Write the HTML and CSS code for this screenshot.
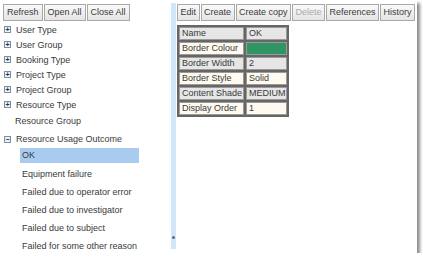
FILE: index.html
```html
<!DOCTYPE html>
<html lang="en">
<head>
    <meta charset="UTF-8">
    <title>Resource Usage Outcome</title>
    <link rel="stylesheet" href="styles.css">
</head>
<body>
    <div class="window">
        <div class="tree-pane">
            <div class="toolbar">
                <button>Refresh</button>
                <button>Open All</button>
                <button>Close All</button>
            </div>

            <ul class="tree">
                <li class="node"><span class="toggle">+</span>User Type</li>
                <li class="node"><span class="toggle">+</span>User Group</li>
                <li class="node"><span class="toggle">+</span>Booking Type</li>
                <li class="node"><span class="toggle">+</span>Project Type</li>
                <li class="node"><span class="toggle">+</span>Project Group</li>
                <li class="node"><span class="toggle">+</span>Resource Type</li>
                <li class="node leaf">Resource Group</li>
                <li class="node open"><span class="toggle">&minus;</span>Resource Usage Outcome</li>
                <li>
                    <ul class="children">
                        <li class="child selected">OK</li>
                        <li class="child">Equipment failure</li>
                        <li class="child">Failed due to operator error</li>
                        <li class="child">Failed due to investigator</li>
                        <li class="child">Failed due to subject</li>
                        <li class="child">Failed for some other reason</li>
                    </ul>
                </li>
            </ul>
        </div>

        <div class="splitter"><span class="grip"></span></div>

        <div class="detail-pane">
            <div class="toolbar actions">
                <button>Edit</button>
                <button>Create</button>
                <button>Create copy</button>
                <button disabled>Delete</button>
                <button>References</button>
                <button>History</button>
            </div>

            <table class="props">
                <tr class="even"><td>Name</td><td>OK</td></tr>
                <tr class="odd"><td>Border Colour</td><td><div class="swatch"></div></td></tr>
                <tr class="even"><td>Border Width</td><td>2</td></tr>
                <tr class="odd"><td>Border Style</td><td>Solid</td></tr>
                <tr class="even"><td>Content Shade</td><td>MEDIUM</td></tr>
                <tr class="odd"><td>Display Order</td><td>1</td></tr>
            </table>
        </div>
    </div>
</body>
</html>
```

FILE: styles.css
```css
:root {
    --text-color: #3a3a3a;
    --button-border: #a8a8a8;
    --splitter-color: #cfe7f8;
    --selected-bg: #aacbf0;
    --row-grey: #e6e6e6;
    --row-cream: #fff9ef;
}

body {
    margin: 0;
    background: #ffffff;
    font-family: "Liberation Sans", Arial, sans-serif;
    font-size: 9px;
    color: var(--text-color);
}

.window {
    display: flex;
    width: 417px;
    height: 253px;
    background: #ffffff;
    box-shadow: 3px 3px 3px rgba(0, 0, 0, 0.45);
    overflow: hidden;
}

.toolbar {
    display: flex;
    gap: 1px;
    height: 17px;
}

button {
    font-family: inherit;
    font-size: 9px;
    color: var(--text-color);
    padding: 0 3px;
    margin: 0;
    border: 1px solid var(--button-border);
    border-radius: 0;
    background: linear-gradient(#fafafa, #e4e4e4);
    line-height: 15px;
    white-space: nowrap;
}

.actions button {
    padding: 0 2.5px;
}

button:disabled {
    color: #aaaaaa;
}

/* left side: tree */
.tree-pane {
    flex-shrink: 0;
    width: 171px;
    padding: 4px 0 0 3px;
    box-sizing: border-box;
}

.tree, .children {
    list-style: none;
    margin: 0;
    padding: 0;
}

.tree {
    margin-top: 1px;
}

.node {
    display: flex;
    align-items: center;
    height: 15px;
    padding-left: 1px;
}

.node.leaf {
    height: 18px;
    padding-left: 12px;
}

.node.open {
    height: 18px;
}

.toggle {
    display: inline-flex;
    align-items: center;
    justify-content: center;
    width: 5px;
    height: 5px;
    margin-right: 5px;
    border: 1px solid #7f8ea0;
    background: #eef2f7;
    color: #24344c;
    font-size: 7px;
    line-height: 5px;
    font-weight: bold;
}

.children {
    padding-left: 17px;
}

.child {
    height: 18px;
    line-height: 18px;
    padding-left: 2px;
    width: 117px;
}

.child.selected {
    height: 15px;
    line-height: 15px;
    margin-bottom: 2px;
    background: var(--selected-bg);
}

/* splitter between the panes */
.splitter {
    flex-shrink: 0;
    display: flex;
    flex-direction: column;
    justify-content: flex-end;
    align-items: flex-start;
    width: 5px;
    margin: 3px 0 4px 0;
    background: var(--splitter-color);
}

.grip {
    width: 3px;
    height: 3px;
    margin: 0 0 10px 1px;
    border-radius: 50%;
    background: #6b6b6b;
}

/* right side: record detail */
.detail-pane {
    flex: 1;
    min-width: 0;
    padding: 4px 0 0 1px;
}

.props {
    margin: 4px 0 0 0;
    border-collapse: separate;
    border-spacing: 2px;
    background: #666666;
}

.props td {
    height: 11px;
    padding: 0 0 0 2px;
    border: 1px solid #9a9a9a;
    line-height: 11px;
    white-space: nowrap;
}

.props td:first-child {
    width: 61px;
}

.props td:last-child {
    width: 35px;
}

.props .even td {
    background: var(--row-grey);
}

.props .odd td {
    background: var(--row-cream);
}

.props .odd td:last-child:has(.swatch) {
    padding: 0;
}

.swatch {
    height: 11px;
    background: #2f9563;
}
```
